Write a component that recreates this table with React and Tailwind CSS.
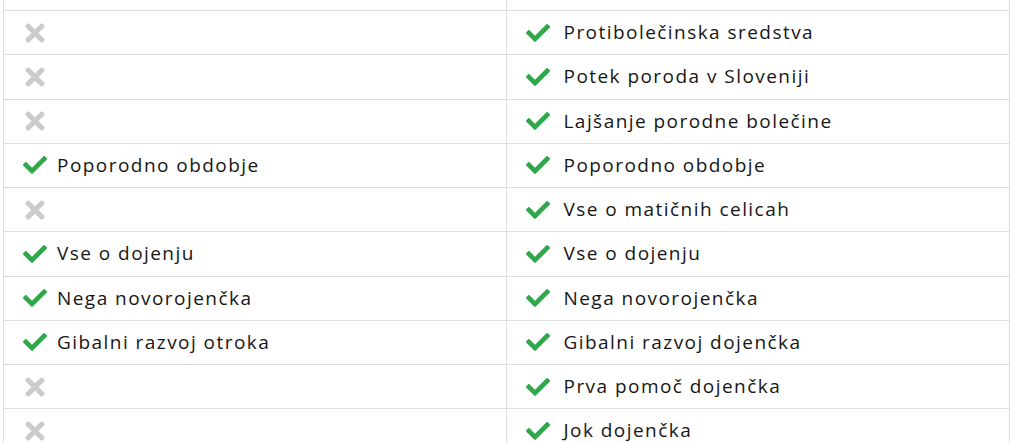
import React from "react";
import { FaCheck, FaTimes } from "react-icons/fa";

const rows = [
  [null, "Protibolečinska sredstva"],
  [null, "Potek poroda v Sloveniji"],
  [null, "Lajšanje porodne bolečine"],
  ["Poporodno obdobje", "Poporodno obdobje"],
  [null, "Vse o matičnih celicah"],
  ["Vse o dojenju", "Vse o dojenju"],
  ["Nega novorojenčka", "Nega novorojenčka"],
  ["Gibalni razvoj otroka", "Gibalni razvoj dojenčka"],
  [null, "Prva pomoč dojenčka"],
  [null, "Jok dojenčka"],
];

function Cell({ text, last }) {
  return (
    <div
      className={
        "flex items-center h-[44.25px] border-t border-[#dedede] " +
        (last ? "" : "border-r ")
      }
    >
      {text ? (
        <div className="flex items-center pl-[19px]">
          <FaCheck size={24} className="text-[#2fa84a] shrink-0" />
          <span
            className={
              (last ? "ml-[14px] " : "ml-[10px] ") +
              "text-[19px] leading-none text-[#161616] tracking-[1.45px]"
            }
          >
            {text}
          </span>
        </div>
      ) : (
        <div className="flex items-center pl-[17px]">
          <FaTimes size={28} className="text-[#cbcbcb] shrink-0" />
        </div>
      )}
    </div>
  );
}

export default function App() {
  return (
    <div
      className="bg-white w-[1018px] h-[443px] overflow-hidden"
      style={{ fontFamily: '"Open Sans", "Noto Sans", sans-serif' }}
    >
      <div className="ml-[3px] w-[1007px] border-l border-r border-[#dedede]">
        <div className="grid grid-cols-2">
          <div className="h-[10px] border-r border-[#dedede]" />
          <div className="h-[10px]" />
          {rows.map((r, i) => (
            <React.Fragment key={i}>
              <Cell text={r[0]} />
              <Cell text={r[1]} last />
            </React.Fragment>
          ))}
        </div>
      </div>
    </div>
  );
}
